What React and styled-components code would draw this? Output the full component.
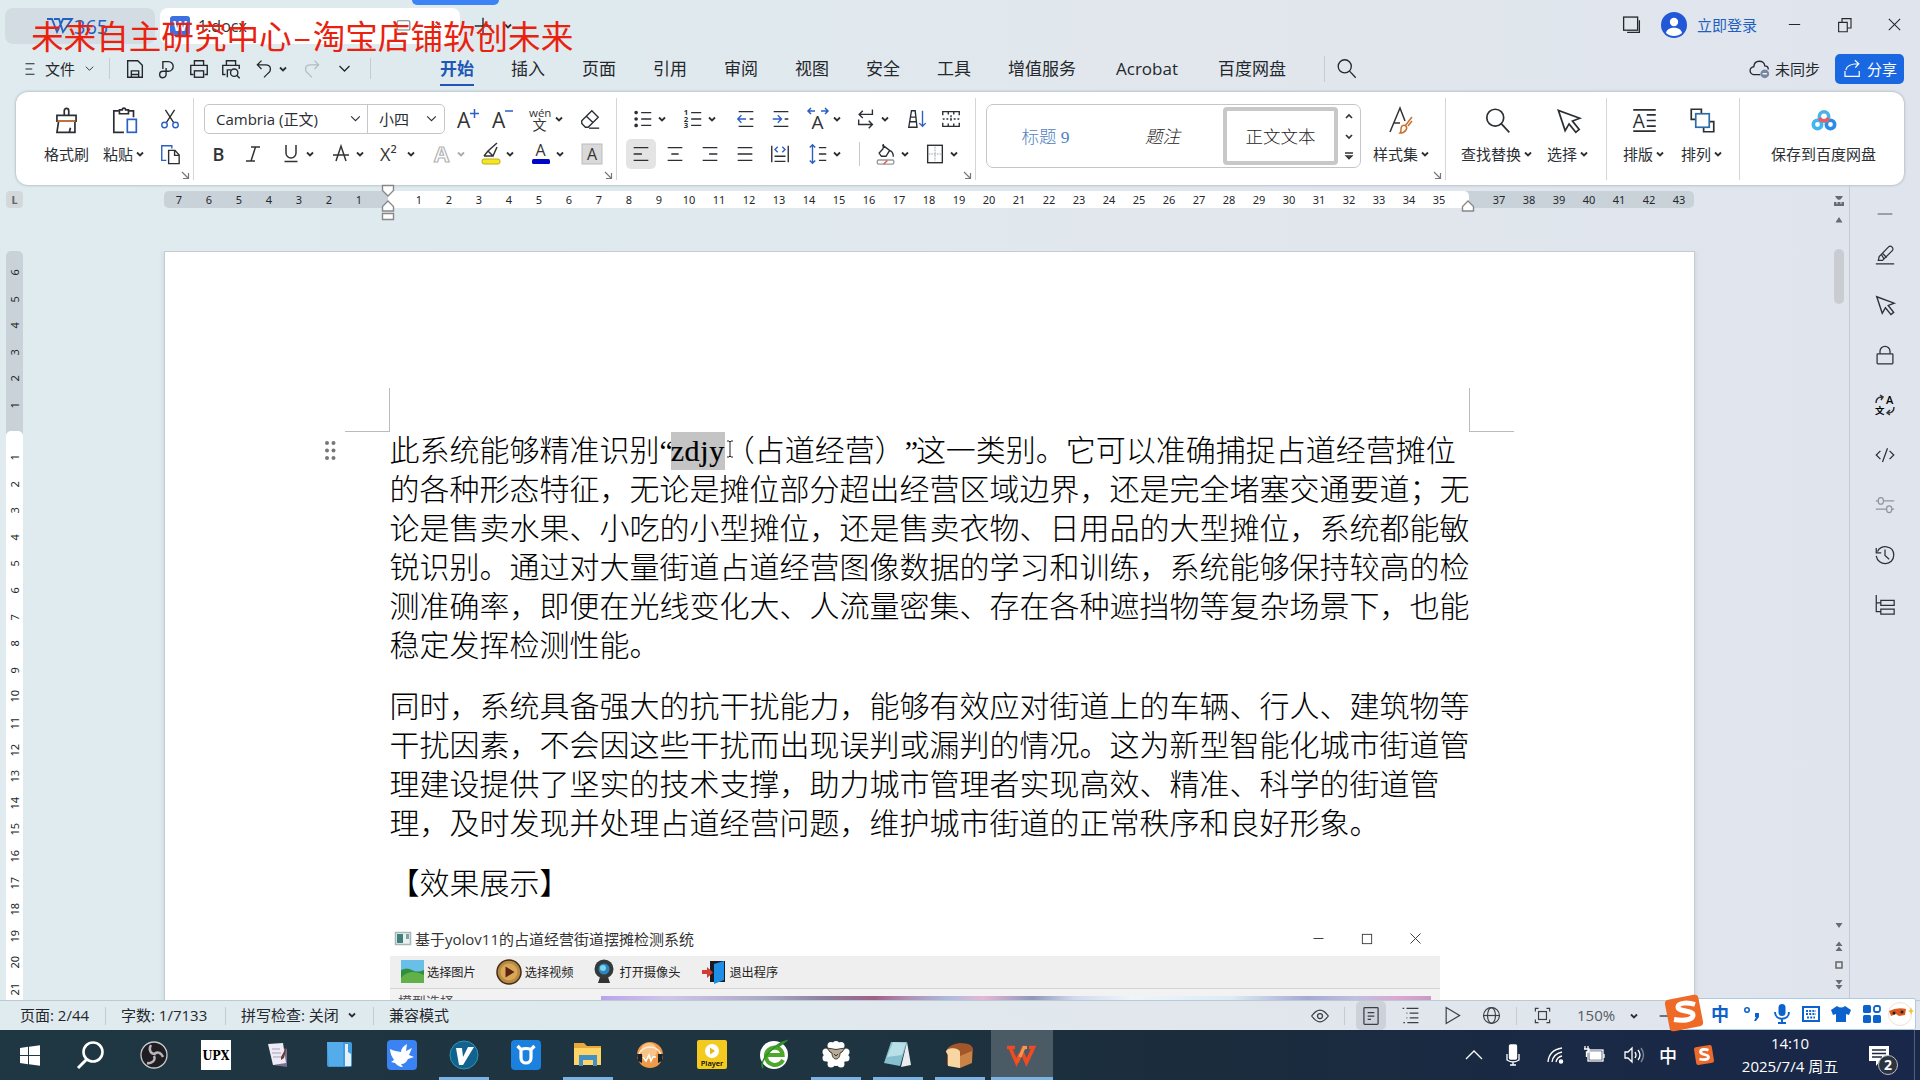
import { Fragment } from "react";
import styled, { createGlobalStyle, css } from "styled-components";

const ui = `"Open Sans", "Noto Sans CJK SC", sans-serif`;
const blue = "#2b5fc4";

const glyphs = {
	burger: <path d="M6 5h12M6 12h9M6 19h12"/>,
	save: <><path d="M4 21V3h11l5 5v13z"/><path d="M8 21v-7h8v7M8 18h8"/></>,
	pdf: <path d="M7.500 12V4h6a5 5 0 0 1 0 10.500h-6a3.500 3.500 0 1 0 3.500 3.500v-7"/>,
	print: <><path d="M7 8V3h10v5M6 18H3V8h18v10h-3"/><rect x="7" y="14" width="10" height="7"/></>,
	preview: <><path d="M7 8V3h10v5M6 18H3V8h18v4M8 21v-8h4"/><circle cx="15.500" cy="16" r="4"/><path d="M18.500 19l3 3"/></>,
	undo: <path d="M9 2L4 7l5 5M4.500 7H14c7 0 7 7 3 10l-5 5"/>,
	redo: <path d="M15 2l5 5-5 5M19.500 7H10c-7 0-7 7-3 10l5 5"/>,
	chevron: <path d="M4 8l8 8 8-8" strokeWidth="2"/>,
	search: <><circle cx="10" cy="9.500" r="7.500"/><path d="M15.500 15l7 7.500"/></>,
	cloud: <><path d="M13 19H6a4.500 4.500 0 0 1-.5-9C6 1.500 17.500 2 18 9c3 0 4 2 4 4"/><circle cx="18" cy="18" r="5" fill="#7886a2" stroke="none"/><path d="M15.500 18h5" stroke="#fff"/></>,
	share: <path d="M2.500 15v7h18v-7M3.500 14C4.500 8.500 10 6 19.500 6M15 1.500L20 6l-4.500 5"/>,
	brush: <><path d="M3.500 7.500h17v5h-17zM5 12.500L3.500 22.500h16V12.500M14.500 22.500l1-4M10 7.500V3.500a2 2.300 0 0 1 4 0v4"/><path d="M4 12.500h16" stroke="#d07a3c"/></>,
	paste: <><path d="M7 3.500H2.500V22.500h9M16 3.500h4V9"/><path d="M7.500 6V2.500h2.500c0-2 3-2 3 0h2.500V6z"/><rect x="14.500" y="11" width="8" height="11.500" stroke={blue}/></>,
	cut: <><path d="M7 2l9 14M17 2L8 16"/><g stroke={blue}><circle cx="6" cy="18.500" r="3"/><circle cx="18" cy="18.500" r="3"/></g></>,
	copy: <><path d="M8 19H3V3h11v3" stroke={blue}/><path d="M10.500 8h7l4.500 5v9.500H10.500zM17 8v5.500h5"/></>,
	eraser: <><path d="M3 14L14 3l7 7-11 11H7l-4-4zM8 9l7.500 7"/><path d="M11 22h11"/></>,
	bullets: <><path d="M10 5h11M10 12h11M10 19h11"/><g strokeWidth="2"><circle cx="4.500" cy="5" r="1"/><circle cx="4.500" cy="12" r="1"/><circle cx="4.500" cy="19" r="1"/></g></>,
	numbers: <><path d="M10 5h11M10 12h11M10 19h11"/><g fill="currentColor" stroke="none" fontSize="8.500" fontWeight="700" fontFamily="Open Sans"><text x="2" y="8">1</text><text x="2" y="15">2</text><text x="2" y="22">3</text></g></>,
	outdent: <><path d="M4 4h16M4 20h16M16 12h4"/><path d="M12 12H3M7 8l-4 4 4 4" stroke={blue}/></>,
	indent: <><path d="M4 4h16M4 20h16M16 12h4"/><path d="M3 12h9M8.500 8l4 4-4 4" stroke={blue}/></>,
	wrap: <path d="M19 1.500V7H4.500M8.500 3l-4 4 4 4M4 12.500V18h15M15 14l4 4-4 4"/>,
	sort: <><path d="M3 21L6 3h4l2 18zM5 10h6M4 15h8"/><path d="M18 3v17M14.500 16.500L18 20l3.500-3.500" stroke={blue}/></>,
	grid: <><path d="M3 8V4h18v4M3 16v4h18v-4M9 4v3M15 4v3M9 20v-3M15 20v-3"/><path d="M3 12h18M12 8v8" strokeDasharray="2 2"/></>,
	left: <path d="M4 5h16M4 12h9M4 19h16"/>,
	center: <path d="M4 5h16M8 12h8M4 19h16"/>,
	right: <path d="M4 5h16M11 12h9M4 19h16"/>,
	justify: <path d="M4 5h16M4 12h16M4 19h16"/>,
	spread: <><path d="M3 3v18M21 3v18M6 14.500h12M6 20h12"/><path d="M9.500 4l-3 3 3 3M14.500 4l3 3-3 3" stroke={blue}/></>,
	spacing: <><path d="M13 5h8M13 12h8M13 19h8"/><path d="M6 2v20M3 5l3-3 3 3M3 19l3 3 3-3" stroke={blue}/></>,
	bucket: <><path d="M8 2l8 6-4 6.500H7L4.500 11 9 6M16 8c3 1 4 4 4 7M9 1v5"/><rect x="2.500" y="18.500" width="18" height="4.500" rx="1.500" stroke="#999"/><path d="M9.500 23l4-4" stroke="#d55"/></>,
	borders: <><rect x="4" y="2.500" width="16" height="19"/><path d="M12 4v16M5 12h14" stroke="#aaa" strokeWidth="1.200" strokeDasharray="2 1"/></>,
	cursor: <path d="M3 3l6 18 3.500-6 6 7.500 3-2.500-6-7.500 6.500-2.500z"/>,
	layout: <><path d="M2 2.500h20M2 21.500h20M14 7h8M14 12h8M14 17h8"/><text x="1.500" y="18.500" fontSize="17" fill="currentColor" stroke="none" fontFamily="Open Sans">A</text></>,
	arrange: <><path d="M6 11H2V2h9v4M18 13h4v9h-9v-4"/><rect x="6" y="6" width="12" height="12" stroke="#2c6ca8"/></>,
	windows: <><rect x="3" y="3.500" width="16" height="15"/><path d="M7 21h14V7"/></>,
	minus: <path d="M4 12h16"/>,
	restore: <><path d="M3.500 8.500H15V21H3.500z"/><path d="M8 8V3.500h12V16h-5"/></>,
	maximize: <rect x="4" y="4" width="16" height="16"/>,
	close: <path d="M4 4l16 16M20 4L4 20"/>,
	plus: <path d="M12 3v18M3 12h18"/>,
	monitor: <><rect x="3" y="4" width="18" height="13" rx="2"/><path d="M8 21h8"/></>,
	marker: <><path d="M1 22.500h22M4 18.500h5L20.500 7c3-3-1.500-7.500-4.500-4.500L5 14zM9.500 10.500l4.500 4.500M8 12l3 5"/></>,
	lock: <><rect x="2.500" y="10.500" width="19" height="12" rx="1"/><path d="M6 10.500V7.500a6 6 0 0 1 12 0v3"/></>,
	code: <path d="M6.500 7l-5 5 5 5M17.500 7l5 5-5 5M15 4L9 20.500"/>,
	sliders: <><path d="M1 7h3M10 7h13M1 17h13M20 17h3"/><rect x="4" y="3" width="6" height="8" rx="3"/><rect x="14" y="13" width="6" height="8" rx="3"/></>,
	history: <path d="M1.500 3.500v6h6M3 8C6-1 22.500 0 22.500 12c0 13-19 14-21 1M12 5.500v7l5 4.500"/>,
	tree: <path d="M1.500 0v20h5M1.500 9.500h5M7 6.500h16v6H7zM7 17h16v6H7z"/>,
	eye: <><path d="M2 12q10-14 20 0-10 14-20 0z"/><circle cx="12" cy="12" r="3"/></>,
	pageview: <><rect x="3.500" y="2" width="17" height="20" rx="1"/><path d="M8 8h8M8 12h8M8 16h4"/></>,
	outline: <path d="M2 3h2M7 3h15M7 9h1M11 9h11M7 15h1M11 15h11M3 21h2M8 21h14"/>,
	play: <path d="M4 2l17 10L4 22z"/>,
	globe: <><circle cx="12" cy="12" r="10"/><ellipse cx="12" cy="12" rx="5" ry="10"/><path d="M2 12h20"/></>,
	fit: <><path d="M3 7V3h4M17 3h4v4M21 17v4h-4M7 21H3v-4"/><rect x="7" y="7" width="10" height="10"/></>,
};

function Icon({ name, size = 20, ...rest }) {
	return <Glyph width={size} height={size} viewBox="0 0 24 24" {...rest}>{glyphs[name]}</Glyph>;
}

function LetterIcon({ kind }) {
	return (
		<Letter viewBox="0 0 24 28" width="24" height="28">
			{kind === "grow" && <><text x="0" y="23" fontSize="21">A</text><path d="M17.500 4v9M13 8.500h9" stroke={blue}/></>}
			{kind === "shrink" && <><text x="0" y="23" fontSize="21">A</text><path d="M13 6h8" stroke={blue}/></>}
			{kind === "pinyin" && <><text x="1" y="12" fontSize="11.500">wén</text><text x="4.500" y="25" fontSize="14">文</text></>}
			{kind === "bold" && <text x="5.500" y="21" fontSize="18" fontWeight="600">B</text>}
			{kind === "italic" && <path d="M10 7h9M5 21h9M14.500 7l-4.500 14"/>}
			{kind === "underline" && <path d="M7 5v8a5 5 0 0 0 10 0V5M5.500 21.500h13"/>}
			{kind === "strike" && <path d="M7 21l5-15 5 15M4 15h16"/>}
			{kind === "power" && <text x="0" y="21" fontSize="18">X²</text>}
			{kind === "effect" && <text x="4" y="22" fontSize="22" fontWeight="700" className="hollow">A</text>}
			{kind === "highlight" && <><path d="M5 16l4-5 9-8M9 11l5 5 4-9M5 16h9"/><rect x="3" y="19" width="18" height="5" rx="2" fill="#f5e61e" stroke="#b9ac22" strokeWidth="1"/></>}
			{kind === "color" && <><text x="6.500" y="16" fontSize="16">A</text><rect x="3" y="19" width="18" height="5" rx="1.500" fill="#0008c8" stroke="none"/></>}
			{kind === "shade" && <><rect x="2" y="4" width="20" height="20" fill="#d9d9d9" stroke="#bbb" strokeWidth="1"/><text x="7" y="20" fontSize="16">A</text></>}
			{kind === "width" && <><text x="5.500" y="24" fontSize="19">A</text><path d="M2 6h7M15 6h7M5 3L2 6l3 3M19 3l3 3-3 3" stroke={blue}/></>}
		</Letter>
	);
}

function Caret({ grey }) {
	return <Arrow $grey={grey} width="10" height="10" viewBox="0 0 10 10"><path d="M2 3.500L5 6.500 8 3.500"/></Arrow>;
}

function Tool({ gap, icon, letter, caret, grey, active }) {
	return (
		<ToolBox $gap={gap} $active={active}>
			{letter ? <LetterIcon kind={letter}/> : <span><Icon name={icon} size={22}/></span>}
			{caret && <Caret grey={grey}/>}
		</ToolBox>
	);
}

function Big({ gap, icon, label, caret = true, children }) {
	return (
		<BigBox $gap={gap}>
			<div className="icon">{children || <Icon name={icon} size={27}/>}</div>
			<div className="label">{label}{caret && <Caret/>}</div>
		</BigBox>
	);
}

const Launcher = () => <LaunchSvg width="9" height="9" viewBox="0 0 9 9"><path d="M1 1l6 6M7.500 2v5.500H2"/></LaunchSvg>;

const tabs = ["开始", "插入", "页面", "引用", "审阅", "视图", "安全", "工具", "增值服务", "Acrobat", "百度网盘"];

const paragraphs = [
	[
		<>此系统能够精准识别<q>“</q><mark>zdjy</mark>（占道经营）<q>”</q>这一类别。它可以准确捕捉占道经营摊位</>,
		"的各种形态特征，无论是摊位部分超出经营区域边界，还是完全堵塞交通要道；无",
		"论是售卖水果、小吃的小型摊位，还是售卖衣物、日用品的大型摊位，系统都能敏",
		"锐识别。通过对大量街道占道经营图像数据的学习和训练，系统能够保持较高的检",
		"测准确率，即便在光线变化大、人流量密集、存在各种遮挡物等复杂场景下，也能",
		"稳定发挥检测性能。",
	],
	[
		"同时，系统具备强大的抗干扰能力，能够有效应对街道上的车辆、行人、建筑物等",
		"干扰因素，不会因这些干扰而出现误判或漏判的情况。这为新型智能化城市街道管",
		"理建设提供了坚实的技术支撑，助力城市管理者实现高效、精准、科学的街道管",
		"理，及时发现并处理占道经营问题，维护城市街道的正常秩序和良好形象。",
	],
	["【效果展示】"],
];

const range = (from, to) => Array.from({ length: Math.abs(to - from) + 1 }, (_, i) => from + (to > from ? i : -i));

function TitleBar() {
	return (
		<TitleRow>
			<HomeTab>
				<svg width="28" height="16" viewBox="0 0 28 16"><path d="M1 1h5l5 13L16 3M8 1h5l4 13L26 1H17l-6 13" fill="none" stroke="#2160c4" strokeWidth="1.800"/></svg>
				365
			</HomeTab>
			<DocTab>
				<b>W</b>
				<span>1.docx</span>
				<Icon name="monitor" size={17}/>
				<Icon name="close" size={12}/>
			</DocTab>
			<NewTab><Icon name="plus" size={22}/><Caret/></NewTab>
			<WindowTools>
				<Icon name="windows" size={21}/>
				<svg className="avatar" width="26" height="26" viewBox="0 0 26 26"><circle cx="13" cy="13" r="13" fill="#2257d8"/><circle cx="13" cy="10" r="4.200" fill="#fff"/><path d="M5 21c1-7 15-7 16 0-4 4-12 4-16 0z" fill="#fff"/></svg>
				<span>立即登录</span>
				<Icon className="min" name="minus" size={17}/>
				<Icon className="restore" name="restore" size={18}/>
				<Icon className="close" name="close" size={17}/>
			</WindowTools>
			<TopPill/>
			<Banner>未来自主研究中心<i>–</i>淘宝店铺软创未来</Banner>
		</TitleRow>
	);
}

function MenuBar() {
	return (
		<MenuRow>
			<QuickBar>
				<Icon name="burger" size={18}/>
				<span>文件</span>
				<Icon name="chevron" size={11}/>
				<Divider $h={21}/>
				<Icon className="q" name="save" size={22}/>
				<Icon className="q" name="pdf" size={22}/>
				<Icon className="q" name="print" size={22}/>
				<Icon className="q" name="preview" size={22}/>
				<Icon className="q" name="undo" size={20}/>
				<Caret/>
				<Icon className="redo" name="redo" size={20}/>
				<Icon className="more" name="chevron" size={15}/>
				<Divider $h={21}/>
			</QuickBar>
			<Tabs>
				{tabs.map((t, i) => <Tab key={t} $on={i === 0} $wide={t === "Acrobat"}>{t}</Tab>)}
			</Tabs>
			<Divider $h={26}/>
			<Icon className="find" name="search" size={21}/>
			<ShareArea>
				<Icon name="cloud" size={21}/>
				<span>未同步</span>
				<button><Icon name="share" size={19}/>分享</button>
			</ShareArea>
		</MenuRow>
	);
}

function RibbonBar() {
	return (
		<Ribbon>
			<Group $w={178}>
				<Big gap={28} icon="brush" label="格式刷" caret={false}/>
				<Big gap={14} icon="paste" label="粘贴"/>
				<Lines>
					<div><Tool gap={13} icon="cut"/></div>
					<div><Tool gap={13} icon="copy"/></div>
				</Lines>
				<Launcher/>
			</Group>
			<Group $w={423}>
				<Lines>
					<div>
						<Combo>
							<div className="name">Cambria (正文)<Icon name="chevron" size={13}/></div>
							<div className="size">小四<Icon name="chevron" size={13}/></div>
						</Combo>
						<Tool gap={12} letter="grow"/>
						<Tool gap={11} letter="shrink"/>
						<Tool gap={12} letter="pinyin" caret/>
						<Tool gap={14} icon="eraser"/>
					</div>
					<div>
						<Tool gap={13} letter="bold"/>
						<Tool gap={10} letter="italic"/>
						<Tool gap={14} letter="underline" caret/>
						<Tool gap={14} letter="strike" caret/>
						<Tool gap={15} letter="power" caret/>
						<Tool gap={14} letter="effect" caret grey/>
						<Tool gap={13} letter="highlight" caret/>
						<Tool gap={14} letter="color" caret/>
						<Tool gap={15} letter="shade"/>
					</div>
				</Lines>
				<Launcher/>
			</Group>
			<Group $w={359}>
				<Lines>
					<div>
						<Tool gap={14} icon="bullets" caret/>
						<Tool gap={14} icon="numbers" caret/>
						<Tool gap={17} icon="outdent"/>
						<Tool gap={11} icon="indent"/>
						<Tool gap={13} letter="width" caret/>
						<Tool gap={12} icon="wrap" caret/>
						<Tool gap={15} icon="sort"/>
						<Tool gap={10} icon="grid"/>
					</div>
					<div>
						<Tool gap={12} icon="left" active/>
						<Tool gap={10} icon="center"/>
						<Tool gap={11} icon="right"/>
						<Tool gap={11} icon="justify"/>
						<Tool gap={11} icon="spread"/>
						<Tool gap={14} icon="spacing" caret/>
						<Divider $h={24} $gap={17}/>
						<Tool gap={14} icon="bucket" caret/>
						<Tool gap={13} icon="borders" caret/>
					</div>
				</Lines>
				<Launcher/>
			</Group>
			<Group $w={470}>
				<Gallery>
					<StyleCard $color="#4f81bd">标题 9</StyleCard>
					<StyleCard $italic>题注</StyleCard>
					<StyleCard $on>正文文本</StyleCard>
					<div className="scroll">
						<svg width="10" height="54" viewBox="0 0 10 54"><path d="M2 9l3-3 3 3M2 26l3 3 3-3M1 44h8M2.500 47L5 49.500 7.500 47z"/></svg>
					</div>
				</Gallery>
				<Big gap={12} label="样式集">
					<svg width="27" height="29" viewBox="0 0 27 29"><path d="M2 26L12 2l5 13M6 17h6" fill="none" stroke="#333" strokeWidth="1.500"/><path d="M24 11l-7 9M20 20l4-5M14 20c3-2 6 1 4 4s-5 3-6 3c2-2 0-5 2-7z" fill="none" stroke="#c8702c" strokeWidth="1.500"/></svg>
				</Big>
				<Launcher/>
			</Group>
			<Group $w={161}>
				<Big gap={15} icon="search" label="查找替换"/>
				<Big gap={14} icon="cursor" label="选择"/>
			</Group>
			<Group $w={133}>
				<Big gap={16} icon="layout" label="排版"/>
				<Big gap={16} icon="arrange" label="排列"/>
			</Group>
			<Group $w={162} $last>
				<Big gap={31} label="保存到百度网盘" caret={false}>
					<svg width="26" height="26" viewBox="0 0 26 26" fill="none" strokeWidth="3.600"><circle cx="6.500" cy="16.500" r="4.200" stroke="#3fb6f0"/><circle cx="19.500" cy="16.500" r="4.200" stroke="#2b8be6"/><circle cx="13" cy="8.500" r="4.700" stroke="#48b4e8"/><path d="M8.500 10a5 5 0 0 0 9 0" stroke="#ec5a62"/></svg>
				</Big>
			</Group>
		</Ribbon>
	);
}

function AppShot() {
	return (
		<Shot>
			<div className="bar">
				<svg width="16" height="13" viewBox="0 0 16 13"><rect x=".5" y=".5" width="15" height="12" fill="#e9f0ef" stroke="#a9b6b6"/><rect x="2" y="2" width="6" height="9" fill="#3f807c"/><rect x="11" y="2" width="3" height="5" fill="#7aa5a3"/></svg>
				<span>基于yolov11的占道经营街道摆摊检测系统</span>
				<Icon name="minus" size={15}/>
				<Icon name="maximize" size={14}/>
				<Icon name="close" size={15}/>
			</div>
			<div className="tools">
				<svg width="23" height="23" viewBox="0 0 23 23"><rect width="23" height="23" fill="#69bfe8"/><path d="M0 10q6-3 11 0t12 0v13H0z" fill="#2f8f3e"/><path d="M0 18Q9 8 23 15v8H0z" fill="#62b04a"/></svg>
				<span>选择图片</span>
				<svg width="26" height="26" viewBox="0 0 26 26"><circle cx="13" cy="13" r="12" fill="#b98a3e" stroke="#3f2b17" strokeWidth="1.500"/><circle cx="13" cy="13" r="8.500" fill="#d8a85a"/><path d="M9.500 7.500l9 5.500-9 5.500z" fill="#5d2412"/></svg>
				<span>选择视频</span>
				<svg width="20" height="25" viewBox="0 0 20 25"><path d="M4 24l2-6h8l2 6z" fill="#333"/><circle cx="10" cy="10" r="9.500" fill="#343a3c"/><circle cx="10" cy="10" r="5.500" fill="#2d86b8"/><circle cx="9" cy="9" r="3" fill="#7fd2f2"/></svg>
				<span className="cam">打开摄像头</span>
				<svg width="24" height="24" viewBox="0 0 24 24"><path d="M8 1h15v21H8z" fill="#1b1c22"/><path d="M12 4l10-3v19l-10 4z" fill="#1e8ee6"/><path d="M0 10h5V7l6 5.500L5 18v-4H0z" fill="#d13c33"/></svg>
				<span>退出程序</span>
			</div>
			<div className="body"><span>模型选择</span><i/></div>
		</Shot>
	);
}

function Workspace() {
	return (
		<Work>
			<Editor>
				<RulerRow>
					<Corner>L</Corner>
					<Ruler>
						<div className="edge">{range(7, 1).map(n => <span key={n}>{n}</span>)}</div>
						<div className="body">{range(1, 35).map(n => <span key={n}>{n}</span>)}</div>
						<div className="edge end">{range(37, 43).map(n => <span key={n}>{n}</span>)}</div>
						<Indent $x={217} width="14" height="38" viewBox="0 0 14 38"><path d="M1.500 1.500h11v5L7 12 1.500 6.500zM7 17l5.500 5.500v4.500h-11v-4.500zM1.500 29.500h11v6h-11z"/></Indent>
						<Indent $x={1297} width="14" height="38" viewBox="0 0 14 38"><path d="M7 17l5.500 5.500v4.500h-11v-4.500z"/></Indent>
					</Ruler>
				</RulerRow>
				<Canvas>
					<SideRuler>
						<div className="edge">{range(6, 1).map(n => <span key={n}>{n}</span>)}</div>
						<div className="body">{range(1, 21).map(n => <span key={n}>{n}</span>)}</div>
					</SideRuler>
					<Page>
						<Crops><i/><i/></Crops>
						<Text>
							{paragraphs.map((lines, i) => (
								<section key={i}>
									{lines.map((line, j) => <p key={j}>{line}</p>)}
								</section>
							))}
						</Text>
						<AppShot/>
						<Grip width="14" height="22" viewBox="0 0 14 22">
							{[3, 10.5, 18].map(y => <Fragment key={y}><circle cx="4" cy={y} r="2"/><circle cx="10.500" cy={y} r="2"/></Fragment>)}
						</Grip>
						<IBeam width="8" height="18" viewBox="0 0 8 18"><path d="M1 1h2l1 1 1-1h2M4 2v14M1 17h2l1-1 1 1h2"/></IBeam>
					</Page>
				</Canvas>
			</Editor>
			<ScrollTrack>
				<svg width="12" height="32" viewBox="0 0 12 32"><path d="M2 1h8L8 4 6 5 4 4zM1 7h2.500v2h1V7h3v2h1V7H11v4H1zM6 22l3.500 5.500h-7z"/></svg>
				<Thumb/>
				<svg width="12" height="72" viewBox="0 0 12 72"><path d="M2.500 2h7L6 7zM2.500 25L6 20.500 9.500 25zM2.500 30L6 25.500 9.500 30zM2.500 59h7L6 63.500zM2.500 64h7L6 68.500z"/><rect x="3" y="41" width="6" height="6" fill="none" stroke="#666" strokeWidth="1.500"/></svg>
			</ScrollTrack>
			<SideBar>
				<div><Icon name="minus" size={22}/></div>
				<div><Icon name="marker"/></div>
				<div><Icon name="cursor" size={22}/></div>
				<div><Icon name="lock"/></div>
				<div><svg width="20" height="20" viewBox="0 0 20 20"><path d="M1 8c0-4 2-6 6-6M5 0l3 2-2 3M19 12c0 4-2 6-6 6M15 15l-3 3 3 2" fill="none" stroke="#333" strokeWidth="1.500"/><text x="11" y="9" fontSize="11" fontWeight="600">A</text><text x="0" y="19" fontSize="9.500" fontWeight="600">文</text></svg></div>
				<div><Icon name="code"/></div>
				<div className="off"><Icon name="sliders"/></div>
				<div><Icon name="history"/></div>
				<div><Icon name="tree"/></div>
			</SideBar>
		</Work>
	);
}

function StatusBar() {
	return (
		<Status>
			<Info $w={106} $pad={20}>页面: 2/44</Info>
			<Info $w={120} $pad={15}>字数: 1/7133</Info>
			<Info $w={148} $pad={15}>拼写检查: 关闭<Caret/></Info>
			<Info $pad={15} $plain>兼容模式</Info>
			<Views>
				<Icon name="eye"/>
				<Divider $h={18} $gap={14}/>
				<span className="on"><Icon name="pageview"/></span>
				<Icon className="list" name="outline" size={19}/>
				<Icon className="v" name="play" size={19}/>
				<Icon className="v2" name="globe" size={19}/>
				<Divider $h={18} $gap={15}/>
				<Icon className="fit" name="fit" size={19}/>
				<span className="zoom">150%</span>
				<Caret/>
				<Icon className="less" name="minus" size={22}/>
			</Views>
			<Ime>
				<SogouMark width="40" height="38" viewBox="0 0 40 38"><rect x="3" y="3" width="34" height="32" rx="4" fill="#ee6a26" transform="rotate(-11 20 19)"/><path d="M31 10.500c-6-2-17-2.500-17 2.500s15 3 15 8-9 6-19 4.500" fill="none" stroke="#fff" strokeWidth="5"/></SogouMark>
				<b>中</b>
				<svg width="18" height="20" viewBox="0 0 18 20"><circle cx="4" cy="6" r="2.200" fill="none" stroke="#0d63ce" strokeWidth="1.600"/><path d="M12 9h4v4l-3 4h-2l2-4h-1z" fill="#0d63ce"/></svg>
				<svg width="18" height="20" viewBox="0 0 18 20"><rect x="5.500" y="0" width="7" height="12" rx="3.500" fill="#0d63ce"/><path d="M2 8c0 9 14 9 14 0M9 15v4M5 19h8" fill="none" stroke="#0d63ce" strokeWidth="2"/></svg>
				<svg width="18" height="16" viewBox="0 0 18 16" fill="none" stroke="#0d63ce" strokeWidth="2"><rect x="1" y="1" width="16" height="14"/><path d="M4 5h10M4 8h10M5 11.500h8" strokeDasharray="2 1.200"/></svg>
				<svg width="20" height="18" viewBox="0 0 20 18"><path d="M6 1q4 3 8 0l6 4-2 5-3-1v8H5V9l-3 1-2-5z" fill="#0d63ce"/></svg>
				<svg width="18" height="18" viewBox="0 0 18 18" fill="#0d63ce"><rect width="8" height="8" rx="1.500"/><rect x="11" y="1" width="6" height="6" rx="2" fill="none" stroke="#0d63ce" strokeWidth="1.800"/><rect y="10" width="8" height="8" rx="1.500"/><rect x="10" y="10" width="8" height="8" rx="1.500"/></svg>
				<svg className="face" width="26" height="26" viewBox="0 0 26 26"><circle cx="12" cy="13" r="11.500" fill="#fff" stroke="#eee2d8"/><path d="M1 10q8-4 17-2l-1 6-6 1-3-2-5 2z" fill="#d9591f"/><circle cx="6" cy="12" r="1.500" fill="#222"/><circle cx="14" cy="11" r="1.500" fill="#222"/><path d="M23 6l1 3 2 1-2 1-1 3-1-3-2-1 2-1z" fill="#f4c430"/></svg>
			</Ime>
		</Status>
	);
}

const apps = [
	{ id: "win", art: <path d="M5 8l8-1.200V15H5zM14 6.700L25 5.200V15H14zM5 16h8v8.200L5 23zM14 16h11v9.800l-11-1.500z" fill="#fff"/> },
	{ id: "find", art: <><circle cx="16" cy="12" r="9.500" fill="none" stroke="#fff" strokeWidth="2.600"/><path d="M9.500 19.500L1 28" stroke="#fff" strokeWidth="3"/></> },
	{ id: "obs", art: <><circle cx="15" cy="15" r="13" fill="#201d22" stroke="#c9c9cb" strokeWidth="1.300"/><g fill="none" stroke="#b7b5b9" strokeWidth="2.400"><path d="M12 5c-3 5 0 9 4 9M24 17c-2-5-7-6-9-2M8 23c5 1 9-3 7-7"/></g></> },
	{ id: "upx", art: <><rect width="30" height="30" fill="#fff"/><text x="15" y="20" textAnchor="middle" fontFamily="DejaVu Serif" fontSize="12" fontWeight="700" textLength="27" lengthAdjust="spacingAndGlyphs">UPX</text></> },
	{ id: "notes", art: <><path d="M8 6l16 3v18l-14-2z" fill="#77708f"/><path d="M5 4l15-1 3 20-13 2z" fill="#eeeaf4"/><path d="M9 9h8M9 13h9M10 17h8" stroke="#a39dba"/><path d="M24 6l-3 12-3 2 0-3z" fill="#6d3b33"/></> },
	{ id: "book", art: <><rect x="2" y="2" width="25" height="25" rx="2" fill="#3f9bdc"/><path d="M2 2h16v24H4z" fill="#55aceb"/><path d="M20 4h3v8l3 2v12h-6z" fill="#e6f0f6"/></> },
	{ id: "bird", art: <><rect width="30" height="30" rx="4" fill="#3b82f2"/><path d="M3 9c4 2 7 2 11 3 0-3 2-6 6-8l-1 7 6-3-3 7 5 2-6 2c-2 4-4 5-7 5l2 3c-4 0-6-2-8-4l-4-1 3-2C5 17 3 13 3 9z" fill="#fff"/></> },
	{ id: "vnote", open: true, art: <><circle cx="15" cy="15" r="14" fill="#12628f" stroke="#2f94bb"/><path d="M7 8h6l1 9 5-10h6L14 25h-4z" fill="#fff"/></> },
	{ id: "ubox", art: <><rect width="30" height="30" rx="4" fill="#1c80de"/><path d="M10 9v9a5 5 0 0 0 10 0V9M10 9.500q5-2 10 0M6.500 6l3.500 3.500M23.500 6L20 9.500" fill="none" stroke="#fff" strokeWidth="3.200"/></> },
	{ id: "files", open: true, art: <><path d="M1 3h10l3 3h14v19H1z" fill="#e6a93a"/><path d="M1 8h27v17H1z" fill="#ffd567"/><path d="M6 26V15h18v11h-4v-6H10v6z" fill="#4390c4"/></> },
	{ id: "audio", art: <><circle cx="15" cy="15" r="13" fill="#ed9a49"/><circle cx="14" cy="11" r="8" fill="#f8c487"/><path d="M4 18C2 4 27 3 26 18" fill="none" stroke="#fff0dd" strokeWidth="1.500"/><path d="M2 14h5v9l-4-2zM28 14h-5v9l4-2z" fill="#1d2229"/><path d="M8 17l3 4 3-6 2 6 2-4h3" fill="none" stroke="#fff" strokeWidth="1.500"/></> },
	{ id: "player", art: <><rect width="30" height="29" rx="2" fill="#f3cb20"/><circle cx="15" cy="11" r="7" fill="#fff"/><path d="M13 7.500l5 3.500-5 3.500z" fill="#e3b71c"/><text x="15" y="26" textAnchor="middle" fontSize="7.500" fontFamily="Open Sans" fontWeight="600">Player</text></> },
	{ id: "browser", art: <><circle cx="15" cy="15" r="14" fill="#fff"/><path d="M24 20c-4 8-17 6-17-4S23 4 23.500 15H9" fill="none" stroke="#4da72c" strokeWidth="4.200"/><path d="M4 28C-1 20 18 3 27 1c-3 3-5 3-8 6" fill="none" stroke="#318f28" strokeWidth="1.600"/></> },
	{ id: "sheep", open: true, art: <><g fill="#fff"><circle cx="15" cy="15" r="11"/><circle cx="10" cy="5.500" r="3.500"/><circle cx="15" cy="4.500" r="3.500"/><circle cx="20" cy="5.500" r="3.500"/><circle cx="5" cy="12" r="3.500"/><circle cx="25" cy="12" r="3.500"/><circle cx="5" cy="18" r="3.500"/><circle cx="25" cy="18" r="3.500"/><circle cx="10" cy="24" r="3.500"/><circle cx="20" cy="24" r="3.500"/></g><path d="M6 8q9 3 18 0l-3 4-2 1c0 4-2 6-4 6s-4-2-4-6l-2-1z" fill="#b8aa96" stroke="#3a332b"/><path d="M13 14l2 2 2-2" fill="none" stroke="#3a332b"/></> },
	{ id: "notepad", open: true, art: <><path d="M8 2h16l-7 24-16-3z" fill="#86bfce"/><path d="M10 2l13 1-4 12L4 17z" fill="#b9e0e7"/><path d="M24 2l4 23-10 2z" fill="#e9edef"/></> },
	{ id: "bread", open: true, art: <><path d="M2 9q4-5 13-6 13 0 13 7l-1 12-13 6-12-3z" fill="#a4562b"/><path d="M1 12c0-5 13-5 14 0v16L3 26V15z" fill="#f8d6a1"/><path d="M15 16l12-5v12l-12 5z" fill="#c98346"/></> },
	{ id: "wps", open: true, active: true, art: <g fill="none" strokeWidth="3.600"><path d="M0 7.500h8M3 7.500l6.500 15L13 14M15.500 13l4 9.500L26.500 7.500H22" stroke="#f04a23"/><path d="M10 22.500L16.500 7.500H20" stroke="#f0551f"/><path d="M13 17l4-9.500h3" stroke="#ee9a58" strokeWidth="3"/></g> },
];

function Taskbar() {
	return (
		<Task>
			<Apps>
				{apps.map(a => <AppSlot key={a.id} $open={a.open} $active={a.active}><svg width="30" height="30" viewBox="0 0 30 30">{a.art}</svg></AppSlot>)}
			</Apps>
			<Tray>
				<svg width="18" height="20" viewBox="0 0 18 20"><path d="M1 14l8-8 8 8"/></svg>
				<svg className="mic" width="16" height="22" viewBox="0 0 16 22"><rect x="4.500" y="1" width="7" height="14" rx="1" fill="#fff"/><path d="M2 10v6q6 4 12 0v-6M8 18v3M5 21h6"/></svg>
				<svg className="wifi" width="18" height="20" viewBox="0 0 18 20"><path d="M2 17Q3 5 16 3M6 17q1-8 10-10M10 17q1-5 6-6"/><circle cx="15" cy="16.500" r="1.600" fill="#fff"/></svg>
				<svg className="power" width="22" height="20" viewBox="0 0 22 20"><rect x="5" y="5" width="15" height="11"/><path d="M7 7h11v7H7zM21 9v4" fill="#fff"/><path d="M2 1v3M5 1v3M1 4h5v3H3.500v5"/></svg>
				<svg className="sound" width="22" height="20" viewBox="0 0 22 20"><path d="M2 7h3l4-4v14l-4-4H2zM12 7q2 3 0 6M15 5q4 5 0 10"/><path d="M18 3q5 7 0 14" opacity=".45"/></svg>
				<span>中</span>
				<svg className="sogou" width="22" height="22" viewBox="0 0 22 22"><rect x="2" y="2" width="18" height="18" rx="2" fill="#ee6a2c" stroke="none" transform="rotate(-9 11 11)"/><path d="M15.500 6c-4-1-8-1-8 2s8 2 8 5-5 3-9 2" strokeWidth="2.800"/></svg>
			</Tray>
			<Clock><span>14:10</span><span>2025/7/4 周五</span></Clock>
			<Notice>
				<svg width="22" height="22" viewBox="0 0 22 22"><path d="M1 1h20v15h-9l-4 5v-5H1z" fill="#fff"/><path d="M4 5h14M4 8.500h14M4 12h10" stroke="#1b2b42" strokeWidth="1.300"/></svg>
				<b>2</b>
			</Notice>
		</Task>
	);
}

export default function App() {
	return (
		<Screen>
			<Reset/>
			<TitleBar/>
			<MenuBar/>
			<RibbonBar/>
			<Workspace/>
			<StatusBar/>
			<Taskbar/>
		</Screen>
	);
}

const Reset = createGlobalStyle`
	body{
		margin: 0;
		overflow: hidden;
	}
	*{
		box-sizing: border-box;
	}
	svg{
		flex: 0 0 auto;
		overflow: visible;
	}
`
const Screen = styled.div`
	width: 1920px;
	height: 1080px;
	display: flex;
	flex-direction: column;
	overflow: hidden;
	font-family: ${ui};
	font-size: 15px;
	color: #24272c;
	background: linear-gradient(90deg, #dfebef 0%, #dfeaee 30%, #e1e7ed 58%, #e0e5ed 100%);
`
const Glyph = styled.svg`
	display: block;
	fill: none;
	stroke: currentColor;
	stroke-width: 1.5;
`
const Letter = styled.svg`
	display: block;
	fill: none;
	stroke: #333;
	stroke-width: 1.5;
	text{
		fill: #333;
		stroke: none;
		font-family: ${ui};
	}
	.hollow{
		fill: #fff;
		stroke: #b4b4b4;
		stroke-width: 1.2;
	}
`
const Arrow = styled.svg`
	fill: none;
	stroke: ${p => p.$grey ? "#aaa" : "#2b2e33"};
	stroke-width: 1.8;
`
const Divider = styled.div`
	width: 1px;
	height: ${p => p.$h}px;
	flex: 0 0 auto;
	background: #c5cbd1;
	margin-left: ${p => p.$gap || 0}px;
`
const TitleRow = styled.header`
	height: 44px;
	display: flex;
	align-items: flex-end;
	position: relative;
`
const HomeTab = styled.div`
	width: 150px;
	height: 36px;
	margin-left: 5px;
	padding-left: 41px;
	border-radius: 8px;
	background: #d3dce2;
	display: flex;
	align-items: center;
	color: #2160c4;
	font-size: 20px;
	font-weight: 500;
`
const DocTab = styled.div`
	width: 300px;
	height: 36px;
	margin-left: 5px;
	padding-left: 10px;
	border-radius: 8px;
	background: #fff;
	display: flex;
	align-items: center;
	color: #333;
	b{
		width: 20px;
		height: 20px;
		border-radius: 3px;
		background: #3e6fe0;
		color: #fff;
		font-size: 14px;
		line-height: 20px;
		text-align: center;
	}
	span{
		width: 197px;
		margin-left: 8px;
		font-size: 16px;
	}
	svg{
		color: #777;
	}
	svg:last-child{
		margin-left: 18px;
	}
`
const NewTab = styled.div`
	height: 36px;
	padding-left: 12px;
	display: flex;
	align-items: center;
	gap: 9px;
`
const WindowTools = styled.div`
	height: 37px;
	margin: 0 0 1px auto;
	padding-right: 17px;
	display: flex;
	align-items: center;
	.avatar{
		margin-left: 19px;
	}
	span{
		margin: 0 29px 0 10px;
		color: #1f5fc0;
	}
	.restore{
		margin-left: 33px;
	}
	.close{
		margin-left: 32px;
	}
`
const TopPill = styled.div`
	position: absolute;
	left: 412px;
	top: 0;
	width: 87px;
	height: 5px;
	border-radius: 0 0 8px 8px;
	background: #3c83f6;
`
const Banner = styled.div`
	position: absolute;
	left: 31px;
	top: 15px;
	white-space: nowrap;
	font: 400 32.6px/40px "Noto Sans CJK SC", sans-serif;
	color: #e9220f;
	i{
		display: inline-block;
		width: 21px;
		text-align: center;
		font-style: normal;
	}
`
const MenuRow = styled.nav`
	height: 48px;
	padding-top: 1px;
	display: flex;
	align-items: center;
	.find{
		margin-left: 11px;
	}
`
const QuickBar = styled.div`
	width: 371px;
	display: flex;
	align-items: center;
	padding-left: 21px;
	span{
		margin: 0 9px 0 6px;
	}
	> div:nth-of-type(1){
		margin-left: 14px;
	}
	.q{
		margin-left: 10px;
	}
	.q:nth-of-type(3){
		margin-left: 14px;
	}
	.q:nth-of-type(7){
		margin: 0 4px 0 12px;
	}
	.redo{
		margin-left: 14px;
		color: #b3bbc2;
	}
	.more{
		margin: 0 18px 0 15px;
	}
`
const Tabs = styled.div`
	display: flex;
	gap: 37px;
	padding-left: 69px;
	margin-right: 38px;
`
const Tab = styled.div`
	font-size: 17px;
	line-height: 28px;
	height: 34px;
	padding-top: 3px;
	white-space: nowrap;
	border-bottom: 2px solid transparent;
	width: ${p => p.$wide ? "68px" : "auto"};
	text-align: center;
	${p => p.$on && css`
		color: #1e57b5;
		font-weight: 700;
		border-color: #1e57b5;
	`}
`
const ShareArea = styled.div`
	margin-left: auto;
	margin-right: 16px;
	display: flex;
	align-items: center;
	span{
		margin: 0 15px 0 5px;
	}
	button{
		width: 69px;
		height: 30px;
		border: 0;
		padding: 0 0 0 8px;
		border-radius: 5px;
		background: #1a67e2;
		color: #fff;
		font: 15px ${ui};
		display: flex;
		align-items: center;
		gap: 5px;
	}
`
const Ribbon = styled.div`
	height: 93px;
	flex: 0 0 auto;
	margin: 0 16px;
	display: flex;
	align-items: center;
	background: #fff;
	border-radius: 12px;
	box-shadow: 0 0 3px rgba(80, 100, 115, .55);
	color: #2b2e33;
`
const Group = styled.div`
	width: ${p => p.$w}px;
	height: 82px;
	flex: 0 0 auto;
	display: flex;
	position: relative;
	border-right: ${p => p.$last ? 0 : "1px solid #d3d6d9"};
`
const LaunchSvg = styled.svg`
	position: absolute;
	right: 3px;
	bottom: 0;
	fill: none;
	stroke: #777;
	stroke-width: 1.2;
`
const Lines = styled.div`
	> div{
		height: 35px;
		display: flex;
		align-items: center;
	}
	> div:first-child{
		margin-top: 4px;
	}
`
const ToolBox = styled.div`
	display: flex;
	align-items: center;
	margin-left: ${p => p.$gap}px;
	gap: 2px;
	span{
		width: 24px;
		display: flex;
		justify-content: center;
	}
	${p => p.$active && css`
		background: #e4e4e4;
		border-radius: 5px;
		padding: 4px 3px;
		margin-left: ${p.$gap - 3}px;
		margin-right: -3px;
	`}
`
const BigBox = styled.div`
	margin-left: ${p => p.$gap}px;
	display: flex;
	flex-direction: column;
	align-items: center;
	.icon{
		height: 46px;
		display: flex;
		align-items: center;
	}
	.label{
		display: flex;
		align-items: center;
		gap: 2px;
		line-height: 20px;
		white-space: nowrap;
	}
`
const Combo = styled.div`
	width: 241px;
	height: 30px;
	margin-left: 10px;
	display: flex;
	border: 1px solid #c3c7cb;
	border-radius: 5px;
	div{
		display: flex;
		align-items: center;
		justify-content: space-between;
		line-height: 24px;
		padding: 0 6px 1px 11px;
	}
	.name{
		width: 163px;
		border-right: 1px solid #c3c7cb;
		padding-right: 5px;
	}
	.size{
		flex: 1;
	}
`
const Gallery = styled.div`
	width: 375px;
	height: 64px;
	margin: 6px 0 0 10px;
	display: flex;
	border: 1px solid #c3c7cb;
	border-radius: 7px;
	.scroll{
		flex: 1;
		display: flex;
		align-items: center;
		justify-content: center;
	}
	.scroll svg{
		fill: none;
		stroke: #333;
		stroke-width: 1.7;
	}
`
const StyleCard = styled.div`
	width: 117px;
	display: flex;
	align-items: center;
	justify-content: center;
	font: 300 17.5px "Liberation Serif", "Noto Sans CJK SC", serif;
	font-style: ${p => p.$italic ? "italic" : "normal"};
	color: ${p => p.$color || "#1c1c1c"};
	${p => p.$on && css`
		width: 115px;
		margin: 2px 0 2px 2px;
		border: 4px solid #c8c8c8;
		border-radius: 4px;
	`}
`
const Work = styled.main`
	height: 815px;
	flex: 0 0 auto;
	display: flex;
`
const Editor = styled.div`
	width: 1828px;
`
const RulerRow = styled.div`
	height: 66px;
	padding: 6px 0 0 6px;
	display: flex;
	align-items: flex-start;
	font: 11px/17px "Noto Sans", sans-serif;
`
const Corner = styled.div`
	width: 17px;
	height: 17px;
	border-radius: 4px;
	background: #d3d8db;
	color: #666;
	font-weight: 700;
	text-align: center;
`
const Ruler = styled.div`
	display: flex;
	position: relative;
	height: 17px;
	margin-left: 141px;
	border-radius: 5px;
	background: #cad2d9;
	span{
		width: 30px;
		text-align: center;
	}
	div{
		display: flex;
	}
	.edge{
		width: 224px;
	}
	.end{
		width: 225px;
		padding-left: 15px;
	}
	.body{
		width: 1081px;
		padding-left: 16px;
		background: #fff;
		border-radius: 0 5px 5px 0;
	}
`
const Indent = styled.svg`
	position: absolute;
	left: ${p => p.$x}px;
	top: -7px;
	fill: #fff;
	stroke: #888;
	stroke-width: 1.4;
`
const Canvas = styled.div`
	height: 749px;
	display: flex;
	overflow: hidden;
`
const SideRuler = styled.div`
	width: 17px;
	height: 800px;
	margin-left: 6px;
	border-radius: 5px;
	background: #cad2d9;
	font: 11px/17px "Noto Sans", sans-serif;
	span{
		width: 17px;
		height: 26.6px;
		writing-mode: vertical-rl;
		transform: rotate(180deg);
		text-align: center;
	}
	div{
		display: flex;
		flex-direction: column;
	}
	.edge{
		height: 180px;
		padding-top: 8px;
	}
	.body{
		height: 620px;
		padding-top: 13px;
		background: #fff;
		border-radius: 5px 5px 0 0;
	}
`
const Page = styled.div`
	width: 1531px;
	height: 800px;
	margin-left: 141px;
	padding: 136px 180px 0;
	background: #fff;
	border: 1px solid #c3ccd0;
	box-shadow: 0 0 5px rgba(120, 150, 150, .25);
	position: relative;
`
const Crops = styled.div`
	height: 44px;
	display: flex;
	justify-content: space-between;
	i{
		width: 45px;
		border-right: 1px solid #bbb;
		border-bottom: 1px solid #bbb;
	}
	i:last-child{
		border-right: 0;
		border-left: 1px solid #bbb;
	}
`
const Text = styled.article`
	margin: -3px 0 0 44.500px;
	font: 300 30px/39.1px "Noto Sans CJK SC", sans-serif;
	color: #000;
	white-space: nowrap;
	section{
		margin-bottom: 21px;
	}
	p{
		margin: 0;
		height: 39.1px;
	}
	mark, q{
		font-family: "Liberation Serif", serif;
		font-weight: 400;
	}
	mark{
		display: inline-block;
		width: 54px;
		height: 38px;
		margin-top: 3px;
		line-height: 37px;
		background: #c4c4c4;
		letter-spacing: .6px;
		-webkit-text-stroke: .2px #000;
		vertical-align: top;
	}
	q{
		display: inline-block;
		width: 11.2px;
		text-align: center;
		quotes: none;
	}
`
const Shot = styled.div`
	width: 1050px;
	margin: 0 0 0 45px;
	white-space: nowrap;
	.bar{
		height: 33.500px;
		display: flex;
		align-items: center;
		padding-left: 5px;
		color: #333;
	}
	.bar span{
		width: 900px;
		padding-left: 4px;
	}
	.bar svg{
		stroke-width: 1.5;
	}
	.bar svg:nth-of-type(3), .bar svg:nth-of-type(4){
		margin-left: 34px;
	}
	.tools{
		height: 33px;
		display: flex;
		align-items: center;
		padding-left: 11px;
		background: #efefef;
		border-bottom: 1px solid #d2d2d2;
		font-size: 12.2px;
		color: #222;
	}
	.tools span{
		padding: 0 20px 0 3px;
	}
	.tools .cam{
		padding: 0 22px 0 6px;
	}
	.body{
		height: 60px;
		display: flex;
		background: #f2f2f3;
		font-size: 14px;
		line-height: 20px;
		padding: 7px 9px 0 8px;
	}
	.body span{
		width: 203px;
		margin-top: -4px;
		color: #555;
	}
	.body i{
		flex: 1;
		background: linear-gradient(90deg, #b9a3ec, #cfc5e8 8%, #a9a8c4 20%, #8d7f9f 27%, #a25f88 33%, #b08fb5 37%, #aebbe0 42%, #e6b7d5 46%, #8f97bb 52%, #d2d9ee 57%, #eef5fb 64%, #dcebf5 76%, #a6a8d4 85%, #bfc0de 91%, #dba6d2 96%, #c89bc4);
	}
`
const Grip = styled.svg`
	position: absolute;
	left: 158px;
	top: 188px;
	fill: #777;
`
const IBeam = styled.svg`
	position: absolute;
	left: 561px;
	top: 188px;
	fill: none;
	stroke: #222;
`
const ScrollTrack = styled.div`
	width: 22px;
	padding-top: 10px;
	display: flex;
	flex-direction: column;
	align-items: center;
	fill: #666c72;
	svg:last-child{
		margin-top: auto;
		margin-bottom: 7px;
	}
`
const Thumb = styled.div`
	width: 10px;
	height: 55px;
	margin-top: 22px;
	border-radius: 5px;
	background: #c9cdd1;
`
const SideBar = styled.aside`
	width: 70px;
	padding: 13px 0 0;
	margin-left: -1px;
	border-left: 1px solid #c3cad3;
	color: #2d3036;
	div{
		height: 50px;
		display: flex;
		align-items: center;
		justify-content: center;
	}
	div:first-child{
		height: 32px;
		color: #7b8085;
	}
	.off{
		color: #8f959d;
	}
	text{
		font-family: ${ui};
	}
`
const Status = styled.footer`
	height: 30px;
	flex: 0 0 auto;
	display: flex;
	align-items: center;
	position: relative;
	border-top: 1px solid #bccad3;
`
const Info = styled.div`
	width: ${p => p.$w ? p.$w + "px" : "auto"};
	height: 18px;
	line-height: 18px;
	padding: 0 0 2px ${p => p.$pad}px;
	border-right: ${p => p.$plain ? 0 : "1px solid #c3ccd2"};
	display: flex;
	align-items: center;
	gap: 8px;
	white-space: nowrap;
`
const Views = styled.div`
	margin-left: auto;
	width: 610px;
	display: flex;
	align-items: center;
	color: #3a3f46;
	.on{
		width: 30px;
		height: 29px;
		margin-left: 11px;
		border-radius: 5px;
		background: #cdd1d9;
		display: flex;
		align-items: center;
		justify-content: center;
	}
	.list{
		margin-left: 15px;
	}
	.v{
		margin-left: 23px;
	}
	.v2{
		margin-left: 20px;
	}
	.fit{
		margin-left: 16px;
	}
	.zoom{
		width: 53px;
		padding: 0 0 2px 25px;
		margin-right: 24px;
		color: #555b63;
	}
	.less{
		margin-left: 17px;
	}
`
const Ime = styled.div`
	position: absolute;
	left: 1685px;
	top: -3px;
	width: 231px;
	height: 32px;
	padding: 0 1px 0 25px;
	display: flex;
	align-items: center;
	justify-content: space-between;
	background: #fff;
	border: 1px solid #a9cbe8;
	border-radius: 2px;
	color: #0d63ce;
	b{
		margin-right: 3px;
		font-size: 18px;
		line-height: 28px;
	}
	.face{
		margin-left: -4px;
	}
`
const SogouMark = styled.svg`
	position: absolute;
	left: -22px;
	top: -5px;
`
const Task = styled.footer`
	height: 50px;
	flex: 0 0 auto;
	display: flex;
	background: linear-gradient(90deg, #1f3743 0%, #1e3440 45%, #1b2c3c 62%, #1a2944 80%, #19274a 100%);
	color: #fff;
`
const Apps = styled.div`
	display: flex;
	margin-left: -1px;
`
const AppSlot = styled.div`
	width: 62px;
	height: 50px;
	display: flex;
	align-items: center;
	justify-content: center;
	background: ${p => p.$active ? "#4a5b66" : "transparent"};
	position: relative;
	&:after{
		content: "";
		display: ${p => p.$open ? "block" : "none"};
		position: absolute;
		bottom: 0;
		left: ${p => p.$active ? 0 : 6}px;
		right: ${p => p.$active ? 0 : 6}px;
		height: 3px;
		background: #7cb3e2;
	}
`
const Tray = styled.div`
	width: 250px;
	margin-left: auto;
	display: flex;
	align-items: center;
	svg{
		fill: none;
		stroke: #fff;
		stroke-width: 1.3;
	}
	.mic{
		margin-left: 22px;
	}
	.wifi{
		margin-left: 25px;
	}
	.power{
		margin-left: 19px;
	}
	.sound{
		margin-left: 18px;
	}
	.sogou{
		margin-left: 16px;
	}
	span{
		margin-left: 14px;
		font-size: 18px;
		font-weight: 500;
	}
`
const Clock = styled.div`
	width: 150px;
	display: flex;
	flex-direction: column;
	align-items: center;
	justify-content: center;
	line-height: 23px;
	white-space: nowrap;
`
const Notice = styled.div`
	width: 50px;
	margin-right: 5px;
	border-right: 1px solid #53606f;
	padding: 15px 0 0 3px;
	position: relative;
	b{
		position: absolute;
		left: 13px;
		top: 25px;
		width: 20px;
		height: 20px;
		border-radius: 50%;
		border: 1px solid #b9bcc2;
		background: #2c3440;
		font-size: 14px;
		line-height: 18px;
		text-align: center;
	}
`
